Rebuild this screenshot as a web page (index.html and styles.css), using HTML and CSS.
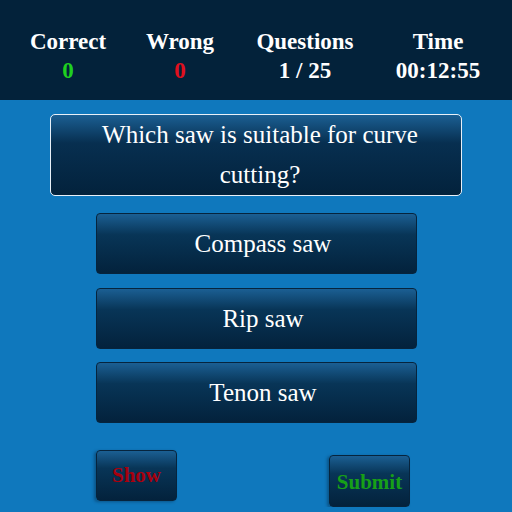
FILE: index.html
```html
<!DOCTYPE html>
<html lang="en">
<head>
  <meta charset="UTF-8" />
  <meta name="viewport" content="width=device-width, initial-scale=1.0"/>
  <title>Quiz</title>
  <link rel="stylesheet" href="styles.css">
</head>
<body>
  <div class="score">
    <div class="stat"><div>Correct</div><div class="right">0</div></div>
    <div class="stat"><div>Wrong</div><div class="wrong">0</div></div>
    <div class="stat"><div>Questions</div><div>1 / 25</div></div>
    <div class="stat"><div>Time</div><div>00:12:55</div></div>
  </div>

  <div class="question">Which saw is suitable for curve cutting?</div>

  <div class="options">
    <div class="option">Compass saw</div>
    <div class="option">Rip saw</div>
    <div class="option">Tenon saw</div>
  </div>

  <div class="actions">
    <div class="btn show">Show</div>
    <div class="btn submit">Submit</div>
  </div>
</body>
</html>
```

FILE: styles.css
```css
body {
  margin: 0;
  background: #0f78bd;
  color: #fff;
  font-family: "Liberation Serif", "Times New Roman", serif;
}
.score {
  height: 100px;
  box-sizing: border-box;
  padding-top: 27px;
  background: #03223a;
  display: grid;
  grid-template-columns: 136px 88px 162px 104px;
  font-size: 23px;
  font-weight: bold;
  line-height: 29px;
  text-align: center;
}
.right { color: #1fd01f; }
.wrong { color: #e0101e; }
.question {
  width: 412px;
  margin: 14px auto 0;
  border: 1px solid #e8f0f8;
  border-radius: 5px;
  background: linear-gradient(#1b5f93, #072f50 35%, #03223c);
  font-size: 25px;
  line-height: 40px;
  text-align: center;
  padding: 0 36px 0 44px;
  box-sizing: border-box;
}
.options {
  display: flex;
  flex-direction: column;
  align-items: center;
  gap: 13.5px;
  margin-top: 17px;
}
.option, .btn {
  border: 1px solid #06243d;
  border-radius: 4px;
  background: linear-gradient(#1b5f93, #083557 35%, #03223c);
  text-align: center;
  box-sizing: border-box;
}
.option {
  width: 321px;
  height: 61px;
  padding-left: 14px;
  font-size: 25px;
  line-height: 59px;
}
.actions {
  display: flex;
  align-items: flex-start;
  gap: 152px;
  margin-top: 27px;
  padding-left: 96px;
}
.btn {
  width: 81px;
  height: 51px;
  font-size: 21px;
  font-weight: bold;
  line-height: 49px;
  box-shadow: -2px 1px 3px rgba(0, 20, 40, 0.35);
}
.show { color: #a8000e; }
.submit {
  color: #17a017;
  height: 52px;
  margin-top: 5px;
  line-height: 52px;
}
```
